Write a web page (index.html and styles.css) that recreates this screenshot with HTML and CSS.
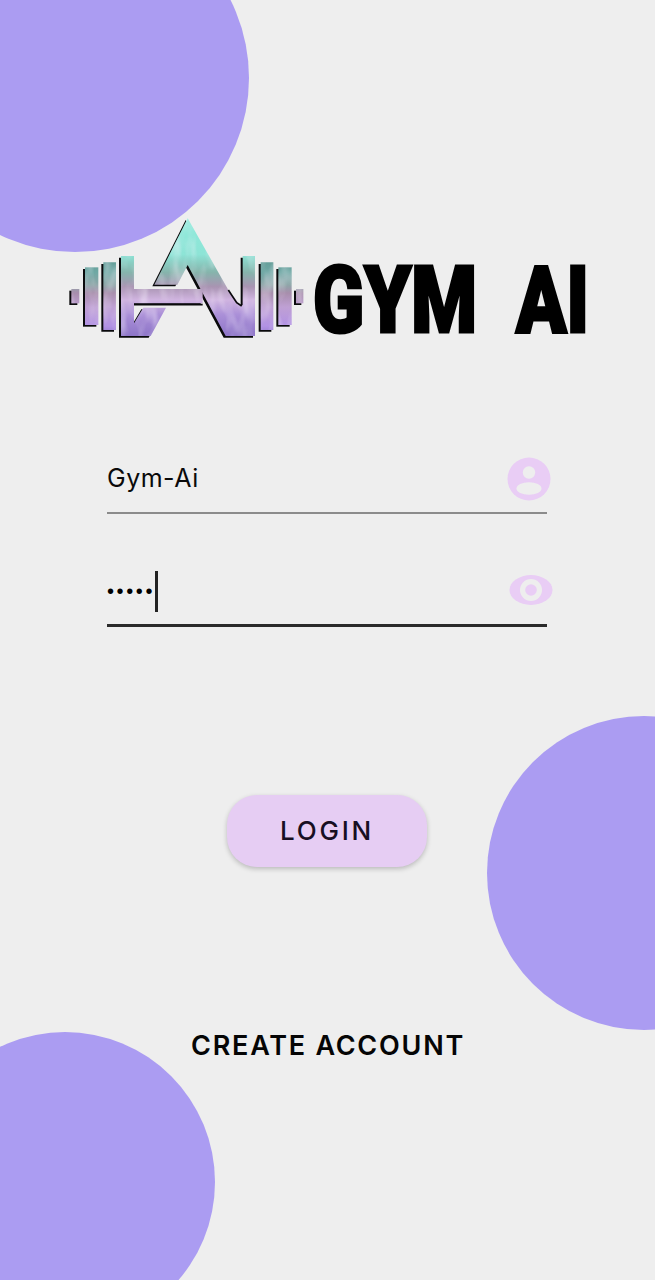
FILE: index.html
```html
<!DOCTYPE html>
<html lang="en">
<head>
<meta charset="utf-8">
<title>Gym AI</title>
<link rel="stylesheet" href="styles.css">
</head>
<body>
<main class="page">
  <div class="blob blob-top"></div>
  <div class="blob blob-right"></div>
  <div class="blob blob-bottom"></div>

  <header class="logo">
    <svg class="logo-mark" viewBox="0 0 780 420" aria-hidden="true">
      <defs>
        <linearGradient id="gradA" gradientUnits="userSpaceOnUse" x1="0" y1="25" x2="0" y2="385">
          <stop offset="0" stop-color="#8feadb"/>
          <stop offset=".3" stop-color="#8de4d6"/>
          <stop offset=".45" stop-color="#86b4ac"/>
          <stop offset=".57" stop-color="#a994b2"/>
          <stop offset=".68" stop-color="#d0b4e0"/>
          <stop offset=".8" stop-color="#ab90d8"/>
          <stop offset="1" stop-color="#8a72c6"/>
        </linearGradient>
        <linearGradient id="gradP" gradientUnits="userSpaceOnUse" x1="0" y1="138" x2="0" y2="385">
          <stop offset="0" stop-color="#5f9a94"/>
          <stop offset=".2" stop-color="#6fa8a4"/>
          <stop offset=".35" stop-color="#8ea6a8"/>
          <stop offset=".45" stop-color="#a88eac"/>
          <stop offset=".62" stop-color="#bfa0d4"/>
          <stop offset=".85" stop-color="#b292e4"/>
          <stop offset="1" stop-color="#8a72c6"/>
        </linearGradient>
        <filter id="photo" x="0" y="0" width="100%" height="100%" color-interpolation-filters="sRGB">
          <feTurbulence type="fractalNoise" baseFrequency=".03 .012" numOctaves="2" seed="7" result="noise"/>
          <feColorMatrix in="noise" type="matrix" values="0 0 0 0 .98  0 0 0 0 .96  0 0 0 0 1  .9 0 0 0 -.38" result="light"/>
          <feComposite in="light" in2="SourceAlpha" operator="in" result="lightIn"/>
          <feMerge>
            <feMergeNode in="SourceGraphic"/>
            <feMergeNode in="lightIn"/>
          </feMerge>
        </filter>
        <g id="plates">
          <polygon points="34,237 58,237 58,280 34,280"/>
          <polygon points="75,172 115,172 115,345 75,345"/>
          <polygon points="130,157 168,157 168,360 130,360"/>
          <polygon points="602,157 640,157 640,360 602,360"/>
          <polygon points="655,172 695,172 695,345 655,345"/>
          <polygon points="708,237 730,237 730,280 708,280"/>
        </g>
        <g id="frame">
          <polygon points="183,138 222,138 222,237 428,237 428,280 222,280 222,340 250,293 318,293 272,378 183,378"/>
          <polygon points="383,25 505,240 543,288 548,285 548,138 585,138 585,378 497,378 383,165 352,224 283,224"/>
        </g>
      </defs>
      <use href="#plates" class="ink" x="-6" y="5"/>
      <use href="#frame" class="ink" x="-6" y="5"/>
      <use href="#plates" class="fill-plates"/>
      <use href="#frame" class="fill-frame"/>
      <polyline class="edge" points="505,240 530,278 545,288"/>
      <line class="edge" x1="222" y1="284" x2="428" y2="284"/>
    </svg>
    <svg class="logo-word" viewBox="0 -10 325 120" role="img" aria-label="GYM AI">
      <text class="word" x="4" y="82" textLength="164" lengthAdjust="spacingAndGlyphs">GYM</text>
      <text class="word" x="207" y="82" textLength="73" lengthAdjust="spacingAndGlyphs">AI</text>
    </svg>
  </header>

  <form class="form">
    <div class="field field-idle">
      <span class="value">Gym-Ai</span>
      <svg class="icon" viewBox="0 0 44 44" aria-hidden="true">
        <circle cx="22" cy="22" r="21.5" class="icon-fill"/>
        <circle cx="22" cy="15.5" r="6.2" class="icon-cut"/>
        <ellipse cx="22" cy="31.5" rx="12.5" ry="6.2" class="icon-cut"/>
      </svg>
    </div>
    <div class="field field-active">
      <span class="dots">•••••</span><span class="caret"></span>
      <svg class="icon" viewBox="0 0 44 44" aria-hidden="true">
        <ellipse cx="22" cy="22" rx="21.500" ry="15" class="icon-fill"/>
        <circle cx="22" cy="22" r="11" class="icon-cut"/>
        <circle cx="22" cy="22" r="5.800" class="icon-fill"/>
      </svg>
    </div>
  </form>

  <button class="login" type="button">LOGIN</button>
  <a class="create">CREATE ACCOUNT</a>
</main>
</body>
</html>
```

FILE: styles.css
```css
* { box-sizing: border-box; }

html, body {
  margin: 0;
  padding: 0;
  background: #eeeeee;
}

.page {
  position: relative;
  width: 655px;
  height: 1280px;
  overflow: hidden;
  display: flex;
  flex-direction: column;
  align-items: center;
  background: #eeeeee;
  font-family: "Inter", "Noto Sans", sans-serif;
  color: #0a0a0a;
}

.blob {
  position: absolute;
  border-radius: 50%;
  background: #ab9cf2;
}
.blob-top { left: -99px; top: -96px; width: 348px; height: 348px; }
.blob-right { left: 487px; top: 716px; width: 314px; height: 314px; }
.blob-bottom { left: -85px; top: 1032px; width: 300px; height: 300px; }

.logo {
  position: relative;
  align-self: flex-start;
  display: flex;
  align-items: flex-start;
  margin: 210px 0 0 60px;
}
.logo-mark { display: block; width: 260px; height: 140px; flex: none; }
.logo-word { display: block; width: 325px; height: 120px; flex: none; margin: 30px 0 0 -11px; }

.ink { fill: #0a0a0c; }
.fill-plates { fill: url(#gradP); filter: url(#photo); }
.fill-frame { fill: url(#gradA); filter: url(#photo); }
.edge { fill: none; stroke: #0a0a0c; stroke-width: 5; }

.word {
  font-family: "Roboto", "Liberation Sans", sans-serif;
  font-weight: 900;
  font-size: 93px;
  fill: #000;
  stroke: #000;
  stroke-width: 3px;
  stroke-linejoin: miter;
}

.form {
  position: relative;
  width: 440px;
  margin-top: 90px;
  margin-left: -1px;
  display: flex;
  flex-direction: column;
}

.field {
  position: relative;
  display: flex;
  align-items: center;
  width: 440px;
}
.field-idle {
  height: 64px;
  border-bottom: 2px solid #8b8b8b;
  padding-bottom: 7px;
}
.field-active {
  height: 65px;
  margin-top: 48px;
  border-bottom: 3px solid #2a2a2a;
  padding-bottom: 4px;
}

.value {
  font-size: 25px;
  letter-spacing: .5px;
  line-height: 30px;
  font-weight: 400;
}
.dots {
  font-family: "Liberation Sans", sans-serif;
  font-size: 20px;
  letter-spacing: 2.6px;
  line-height: 30px;
  color: #000;
}
.caret {
  display: block;
  width: 3px;
  height: 41px;
  background: #222;
}

.icon {
  position: absolute;
  width: 44px;
  height: 44px;
  left: 400px;
}
.field-idle .icon { top: 7px; }
.field-active .icon { left: 402px; top: 6px; }
.icon-fill { fill: #e9cdf5; }
.icon-cut { fill: #eeeeee; }

.login {
  position: relative;
  width: 200px;
  height: 72px;
  margin-top: 168px;
  margin-left: -1px;
  border: 0;
  border-radius: 30px;
  background: #e6cdf3;
  box-shadow: 0 2px 5px rgba(0, 0, 0, .22);
  font-family: inherit;
  font-size: 26px;
  font-weight: 500;
  letter-spacing: 2.8px;
  color: #170f22;
  padding-bottom: 2px;
}

.create {
  position: relative;
  margin-top: 161px;
  margin-left: 1px;
  font-size: 27px;
  line-height: 36px;
  font-weight: 600;
  letter-spacing: 1.75px;
  color: #050505;
}
```
